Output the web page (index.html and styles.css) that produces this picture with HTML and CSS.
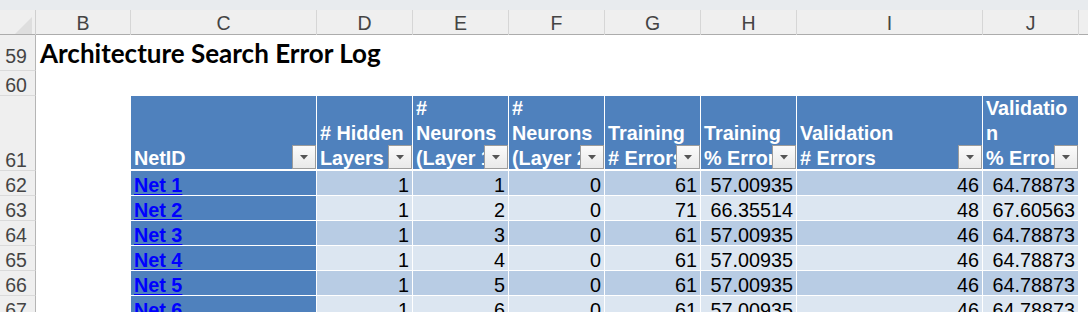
FILE: index.html
```html
<!DOCTYPE html>
<html>
<head>
<meta charset="utf-8">
<link rel="stylesheet" href="styles.css">
</head>
<body>
<div class="topbar"></div>
<div class="sheet">
  <div class="row colhead">
    <div class="corner"><svg class="tri" width="18" height="18" viewBox="0 0 18 18"><polygon points="1,18 18,18 18,1" fill="#dedede"/></svg></div>
    <div class="ch">B</div>
    <div class="ch">C</div>
    <div class="ch">D</div>
    <div class="ch">E</div>
    <div class="ch">F</div>
    <div class="ch">G</div>
    <div class="ch">H</div>
    <div class="ch">I</div>
    <div class="ch">J</div>
    <div class="ch last"></div>
  </div>

  <div class="row r59">
    <div class="rh">59</div>
    <div class="title">Architecture Search Error Log</div>
  </div>

  <div class="row r60">
    <div class="rh">60</div>
  </div>

  <div class="row r61">
    <div class="rh">61</div>
    <div class="blank"></div>
    <div class="th"><div class="lines"><span>NetID</span></div><div class="fbtn"><svg width="8" height="5" viewBox="0 0 8 5"><polygon points="0,0 8,0 4,4.5" fill="#555"/></svg></div></div>
    <div class="th"><div class="lines"><span># Hidden</span><span>Layers</span></div><div class="fbtn"><svg width="8" height="5" viewBox="0 0 8 5"><polygon points="0,0 8,0 4,4.5" fill="#555"/></svg></div></div>
    <div class="th"><div class="lines"><span>#</span><span>Neurons</span><span>(Layer 1)</span></div><div class="fbtn"><svg width="8" height="5" viewBox="0 0 8 5"><polygon points="0,0 8,0 4,4.5" fill="#555"/></svg></div></div>
    <div class="th"><div class="lines"><span>#</span><span>Neurons</span><span>(Layer 2)</span></div><div class="fbtn"><svg width="8" height="5" viewBox="0 0 8 5"><polygon points="0,0 8,0 4,4.5" fill="#555"/></svg></div></div>
    <div class="th"><div class="lines"><span>Training</span><span># Errors</span></div><div class="fbtn"><svg width="8" height="5" viewBox="0 0 8 5"><polygon points="0,0 8,0 4,4.5" fill="#555"/></svg></div></div>
    <div class="th"><div class="lines"><span>Training</span><span>% Errors</span></div><div class="fbtn"><svg width="8" height="5" viewBox="0 0 8 5"><polygon points="0,0 8,0 4,4.5" fill="#555"/></svg></div></div>
    <div class="th"><div class="lines"><span>Validation</span><span># Errors</span></div><div class="fbtn"><svg width="8" height="5" viewBox="0 0 8 5"><polygon points="0,0 8,0 4,4.5" fill="#555"/></svg></div></div>
    <div class="th"><div class="lines"><span>Validatio</span><span>n</span><span>% Errors</span></div><div class="fbtn"><svg width="8" height="5" viewBox="0 0 8 5"><polygon points="0,0 8,0 4,4.5" fill="#555"/></svg></div></div>
  </div>

  <div class="row drow odd">
    <div class="rh">62</div><div class="blank"></div>
    <div class="td id"><a href="#">Net 1</a></div>
    <div class="td">1</div><div class="td">1</div><div class="td">0</div><div class="td">61</div><div class="td">57.00935</div><div class="td">46</div><div class="td">64.78873</div>
  </div>
  <div class="row drow even">
    <div class="rh">63</div><div class="blank"></div>
    <div class="td id"><a href="#">Net 2</a></div>
    <div class="td">1</div><div class="td">2</div><div class="td">0</div><div class="td">71</div><div class="td">66.35514</div><div class="td">48</div><div class="td">67.60563</div>
  </div>
  <div class="row drow odd">
    <div class="rh">64</div><div class="blank"></div>
    <div class="td id"><a href="#">Net 3</a></div>
    <div class="td">1</div><div class="td">3</div><div class="td">0</div><div class="td">61</div><div class="td">57.00935</div><div class="td">46</div><div class="td">64.78873</div>
  </div>
  <div class="row drow even">
    <div class="rh">65</div><div class="blank"></div>
    <div class="td id"><a href="#">Net 4</a></div>
    <div class="td">1</div><div class="td">4</div><div class="td">0</div><div class="td">61</div><div class="td">57.00935</div><div class="td">46</div><div class="td">64.78873</div>
  </div>
  <div class="row drow odd">
    <div class="rh">66</div><div class="blank"></div>
    <div class="td id"><a href="#">Net 5</a></div>
    <div class="td">1</div><div class="td">5</div><div class="td">0</div><div class="td">61</div><div class="td">57.00935</div><div class="td">46</div><div class="td">64.78873</div>
  </div>
  <div class="row drow even">
    <div class="rh">67</div><div class="blank"></div>
    <div class="td id"><a href="#">Net 6</a></div>
    <div class="td">1</div><div class="td">6</div><div class="td">0</div><div class="td">61</div><div class="td">57.00935</div><div class="td">46</div><div class="td">64.78873</div>
  </div>
</div>
</body>
</html>
```

FILE: styles.css
```css
* {
  box-sizing: border-box;
  margin: 0;
  padding: 0;
}

body {
  margin: 0;
  width: 1088px;
  height: 312px;
  overflow: hidden;
  background: #ffffff;
  font-family: "Liberation Sans", Arial, sans-serif;
  font-size: 19.5px;
}

.topbar {
  height: 10px;
  background: #e8ebee;
}

.row {
  display: grid;
  grid-template-columns: 36px 95px 186px 96px 96px 96px 96px 96px 186px 96px 1fr;
}

/* column letters */
.colhead {
  height: 25px;
  background: #efefef;
  border-bottom: 1px solid #acacac;
}

.corner {
  position: relative;
  border-right: 1px solid #cfcfcf;
}

.tri {
  position: absolute;
  right: 3px;
  bottom: 1px;
}

.ch {
  border-right: 1px solid #d6d6d6;
  text-align: center;
  line-height: 24px;
  padding-top: 1px;
  color: #444444;
}

.ch.last {
  border-right: none;
}

/* row numbers */
.rh {
  background: #efefef;
  border-right: 1px solid #b5b5b5;
  border-bottom: 1px solid #dadada;
  display: flex;
  align-items: flex-end;
  justify-content: center;
  padding-right: 3px;
  line-height: 19.5px;
  color: #444444;
}

.r59 {
  height: 36px;
}

.r59 .rh {
  padding-bottom: 4px;
}

.r60 {
  height: 25px;
}

.r61 {
  height: 75px;
}

.drow {
  height: 25px;
}

.title {
  grid-column: 2 / -1;
  display: flex;
  align-items: flex-end;
  padding-left: 4px;
  padding-bottom: 5px;
  font-family: Lato, "Liberation Sans", sans-serif;
  font-weight: 700;
  font-size: 26px;
  line-height: 26px;
  color: #000000;
}

/* table header */
.th {
  position: relative;
  overflow: hidden;
  background: #4f81bd;
  border-right: 1px solid #ffffff;
  box-shadow: inset 0 -2px 0 #ffffff;
  color: #ffffff;
  font-weight: 700;
  font-size: 19.8px;
  padding-left: 3px;
}

.lines {
  height: 100%;
  display: flex;
  flex-direction: column;
  justify-content: flex-end;
  line-height: 25px;
  white-space: nowrap;
}

.fbtn {
  position: absolute;
  right: 0;
  bottom: 2px;
  width: 24px;
  height: 24px;
  border: 1px solid #9c9c9c;
  background: linear-gradient(#fbfbfb, #e9e9e9);
  display: flex;
  align-items: center;
  justify-content: center;
}

.fbtn svg {
  display: block;
}

/* table body */
.td {
  border-right: 1px solid #ffffff;
  border-bottom: 1px solid #ffffff;
  display: flex;
  align-items: flex-end;
  justify-content: flex-end;
  padding-right: 3px;
  font-size: 19.8px;
  line-height: 19.5px;
  color: #000000;
  white-space: nowrap;
  overflow: hidden;
}

.odd .td {
  background: #b8cce4;
}

.even .td {
  background: #dce6f1;
}

.drow .td.id {
  background: #4f81bd;
  justify-content: flex-start;
  padding-left: 3px;
  padding-right: 0;
}

.td.id a {
  color: #0000ff;
  font-weight: 700;
  text-decoration: underline;
  text-decoration-thickness: 2px;
  text-underline-offset: 2px;
}
```
